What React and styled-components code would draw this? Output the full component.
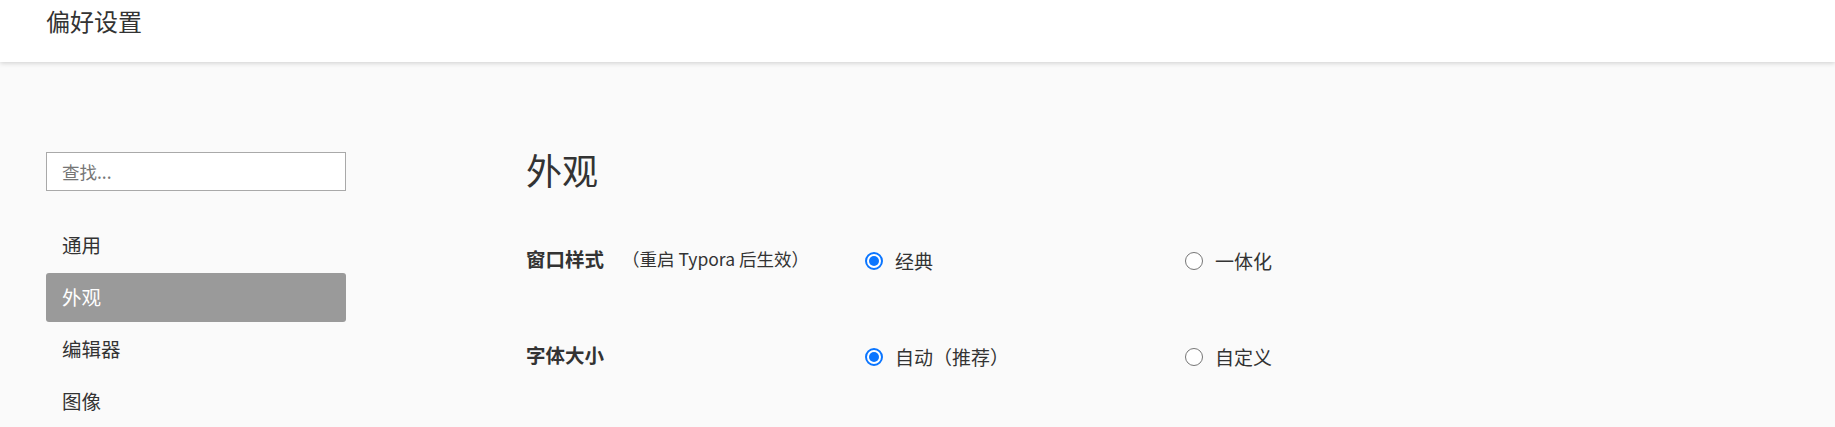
import React from "react";
import styled, { createGlobalStyle } from "styled-components";

const Global = createGlobalStyle`
  html, body { margin: 0; padding: 0; background: #fafafa; }
  body {
    font-family: "Noto Sans", "Noto Sans CJK SC", sans-serif;
    color: #333;
  }
  * { box-sizing: border-box; }
`;

const Page = styled.div`
  width: 1835px;
  height: 427px;
  overflow: hidden;
  background: #fafafa;
`;

const Header = styled.header`
  height: 62px;
  background: #fff;
  box-shadow: 0 1px 5px rgba(0, 0, 0, 0.18);
  padding: 4px 0 0 46px;
  position: relative;
  z-index: 1;
`;

const Title = styled.h1`
  margin: 0;
  font-size: 24px;
  font-weight: 400;
  line-height: 34px;
  color: #333;
  font-family: "Noto Sans CJK SC", sans-serif;
`;

const Body = styled.div`
  display: flex;
  padding-left: 46px;
`;

const Sidebar = styled.aside`
  width: 300px;
  padding-top: 90px;
  display: flex;
  flex-direction: column;
`;

const Search = styled.input`
  width: 300px;
  height: 39px;
  border: 1px solid #a9a9a9;
  background: #fff;
  padding: 0 15px;
  font-size: 17.5px;
  font-family: "Noto Sans CJK SC", sans-serif;
  color: #333;
  outline: none;
  &::placeholder { color: #767676; }
`;

const Nav = styled.nav`
  margin-top: 30px;
  display: flex;
  flex-direction: column;
  gap: 3px;
`;

const NavItem = styled.div`
  height: 49px;
  display: flex;
  align-items: center;
  padding: 0 0 3px 16px;
  border-radius: 3px;
  font-size: 19.5px;
  font-family: "Noto Sans CJK SC", sans-serif;
  color: ${(p) => (p.$active ? "#fff" : "#333")};
  background: ${(p) => (p.$active ? "#9a9a9a" : "transparent")};
`;

const Main = styled.main`
  margin-left: 180px;
  padding-top: 82px;
  flex: 1;
`;

const Heading = styled.h2`
  margin: 0;
  font-size: 36px;
  font-weight: 400;
  line-height: 50px;
  color: #333;
  font-family: "Noto Sans CJK SC", sans-serif;
`;

const Rows = styled.div`
  margin-top: 49px;
  display: flex;
  flex-direction: column;
  gap: 66px;
`;

const Row = styled.div`
  display: grid;
  grid-template-columns: 339px 320px 320px;
  align-items: center;
  height: 30px;
`;

const Label = styled.div`
  display: flex;
  align-items: center;
  font-family: "Noto Sans CJK SC", sans-serif;
`;

const LabelText = styled.span`
  font-size: 19.5px;
  font-weight: 700;
  color: #333;
`;

const Note = styled.span`
  margin-left: 18px;
  font-size: 17.5px;
  color: #333;
`;

const Option = styled.label`
  display: flex;
  align-items: center;
  gap: 12px;
  font-size: 19px;
  font-family: "Noto Sans CJK SC", sans-serif;
  color: #333;
  margin-top: 4px;
`;

const Radio = styled.span`
  width: 18px;
  height: 18px;
  border-radius: 50%;
  flex: none;
  border: ${(p) => (p.$checked ? "2px solid #0a75ff" : "1.6px solid #767676")};
  background: #fff;
  display: flex;
  align-items: center;
  justify-content: center;
  &::after {
    content: "";
    width: 10px;
    height: 10px;
    border-radius: 50%;
    background: ${(p) => (p.$checked ? "#0a75ff" : "transparent")};
  }
`;

const navItems = ["通用", "外观", "编辑器", "图像"];

const rows = [
  { label: "窗口样式", note: "（重启 Typora 后生效）", options: ["经典", "一体化"] },
  { label: "字体大小", note: null, options: ["自动（推荐）", "自定义"] },
];

export default function App() {
  return (
    <Page>
      <Global />
      <Header>
        <Title>偏好设置</Title>
      </Header>
      <Body>
        <Sidebar>
          <Search placeholder="查找..." />
          <Nav>
            {navItems.map((n) => (
              <NavItem key={n} $active={n === "外观"}>
                {n}
              </NavItem>
            ))}
          </Nav>
        </Sidebar>
        <Main>
          <Heading>外观</Heading>
          <Rows>
            {rows.map((r) => (
              <Row key={r.label}>
                <Label>
                  <LabelText>{r.label}</LabelText>
                  {r.note && <Note>{r.note}</Note>}
                </Label>
                {r.options.map((o, i) => (
                  <Option key={o}>
                    <Radio $checked={i === 0} />
                    {o}
                  </Option>
                ))}
              </Row>
            ))}
          </Rows>
        </Main>
      </Body>
    </Page>
  );
}
